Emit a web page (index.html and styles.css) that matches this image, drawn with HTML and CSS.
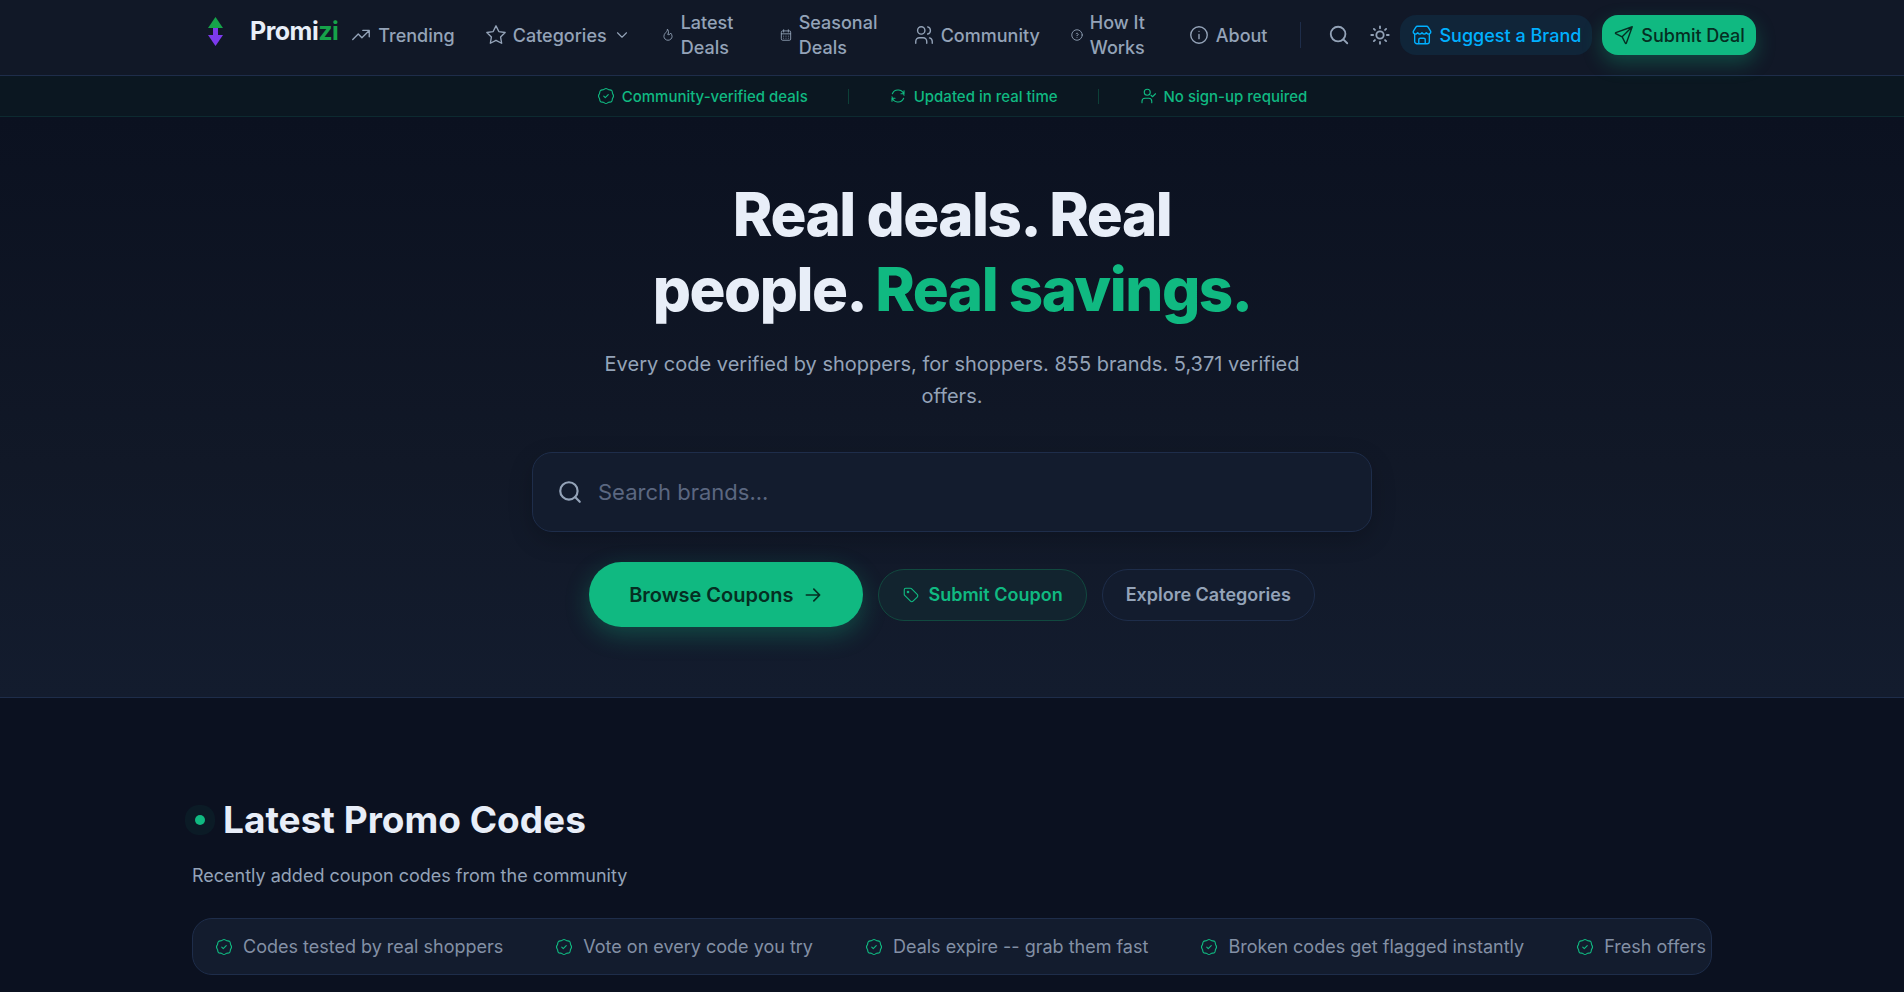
FILE: index.html
```
<!DOCTYPE html>
<html lang="en">
<head>
    <meta charset="UTF-8">
    <meta name="viewport" content="width=device-width, initial-scale=1.0">
    <title>Promizi - Community-verified promo codes</title>
    <link rel="stylesheet" href="styles.css">
</head>
<body>
    <!-- Icon set -->
    <svg class="sprite" aria-hidden="true">
        <symbol id="i-trending" viewBox="0 0 24 24"><path d="M3 17l6-6 4 4 8-8M14 7h7v7"/></symbol>
        <symbol id="i-star" viewBox="0 0 24 24"><path d="M12 17.75l-6.172 3.245 1.179-6.873-5-4.867 6.9-1 3.086-6.253 3.086 6.253 6.9 1-5 4.867 1.179 6.873z"/></symbol>
        <symbol id="i-chevron" viewBox="0 0 24 24"><path d="M6 9l6 6 6-6"/></symbol>
        <symbol id="i-flame" viewBox="0 0 24 24"><path d="M12 10.941c2.333-3.308.167-7.823-1-8.941 0 3.395-2.235 5.299-3.667 6.706C5.903 10.114 5 12.327 5 14.294 5 17.998 8.134 21 12 21s7-3.002 7-6.706c0-1.712-1.232-4.403-2.333-5.588-2.084 3.353-3.257 3.353-4.667 2.235"/></symbol>
        <symbol id="i-calendar" viewBox="0 0 24 24"><path d="M4 7a2 2 0 0 1 2-2h12a2 2 0 0 1 2 2v12a2 2 0 0 1-2 2H6a2 2 0 0 1-2-2zM16 3v4M8 3v4M4 10h16M8 14h.01M12 14h.01M16 14h.01M8 17.500h.01M12 17.500h.01M16 17.500h.01"/></symbol>
        <symbol id="i-users" viewBox="0 0 24 24"><circle cx="9" cy="7" r="4"/><path d="M3 21v-2a4 4 0 0 1 4-4h4a4 4 0 0 1 4 4v2M16 3.130a4 4 0 0 1 0 7.750M21 21v-2a4 4 0 0 0-3-3.850"/></symbol>
        <symbol id="i-help" viewBox="0 0 24 24"><circle cx="12" cy="12" r="9"/><path d="M12 16v.01M12 13a2 2 0 0 0 .914-3.782 1.980 1.980 0 0 0-2.414.483"/></symbol>
        <symbol id="i-info" viewBox="0 0 24 24"><circle cx="12" cy="12" r="9"/><path d="M12 8h.01M12 11.500v4.500"/></symbol>
        <symbol id="i-search" viewBox="0 0 24 24"><circle cx="11" cy="11" r="8"/><path d="M21 21l-4.300-4.300"/></symbol>
        <symbol id="i-sun" viewBox="0 0 24 24"><circle cx="12" cy="12" r="4"/><path d="M2.500 12h2M12 2.500v2M19.500 12h2M12 19.500v2M5.300 5.300l1.200 1.200M18.700 5.300l-1.200 1.200M17.500 17.500l1.200 1.200M6.500 17.500l-1.200 1.200"/></symbol>
        <symbol id="i-store" viewBox="0 0 24 24"><path d="M7 2.500h10a2 2 0 0 1 1.700 1L21.500 8v1a1.500 1.500 0 0 1-1.500 1.500M7 2.500a2 2 0 0 0-1.700 1L2.500 8v1A1.500 1.500 0 0 0 4 10.500M2.500 9.500q2.400 3 4.800 0 2.300 3 4.700 0 2.400 3 4.700 0 2.400 3 4.800 0M4 10.500V19a2.500 2.500 0 0 0 2.500 2.500h11A2.500 2.500 0 0 0 20 19v-8.500M8.500 21.500V17a1.500 1.500 0 0 1 1.500-1.500h4a1.500 1.500 0 0 1 1.500 1.500v4.500"/></symbol>
        <symbol id="i-send" viewBox="0 0 24 24"><path d="M10 14L21 3M21 3l-6.500 18a.55.55 0 0 1-1 0L10 14l-7-3.500a.55.55 0 0 1 0-1z"/></symbol>
        <symbol id="i-verified" viewBox="0 0 24 24"><path d="M12 2c1.600 0 2.300 1.200 3.700 1.600s2.700-.1 3.800 1 .8 2.400 1.200 3.800S22 10.500 22 12s-1 2.200-1.400 3.600-.1 2.700-1.200 3.800-2.400.6-3.800 1S13.600 22 12 22s-2.200-1.200-3.600-1.600-2.700.1-3.800-1-.8-2.500-1.200-3.800S2 13.500 2 12s1-2.200 1.400-3.600.1-2.600 1.200-3.700 2.400-.6 3.800-1S10.400 2 12 2zM9 12.200l2 2 4-4"/></symbol>
        <symbol id="i-refresh" viewBox="0 0 24 24"><path d="M20 11A8.100 8.100 0 0 0 4.500 9M4 13a8.100 8.100 0 0 0 15.500 2M20 5v4h-4M4 19v-4h4"/></symbol>
        <symbol id="i-user-check" viewBox="0 0 24 24"><circle cx="11" cy="7" r="4"/><path d="M4 21v-2a4 4 0 0 1 4-4h5a4 4 0 0 1 4 4v2M16 11l2 2 4-4"/></symbol>
        <symbol id="i-tag" viewBox="0 0 24 24"><circle cx="8" cy="8" r="1"/><path d="M3 5v6.200a2 2 0 0 0 .6 1.400l7.700 7.700a2.400 2.400 0 0 0 3.400 0l5.600-5.600a2.400 2.400 0 0 0 0-3.400l-7.700-7.700A2 2 0 0 0 11.200 3H5a2 2 0 0 0-2 2z"/></symbol>
        <symbol id="i-arrow" viewBox="0 0 24 24"><path d="M4 12h16M13 5l7 7-7 7"/></symbol>
    </svg>

    <div class="page">
        <header class="header">
            <div class="header-inner">
                <a href="#" class="logo">
                    <svg class="logo-mark" viewBox="0 1 46 42" aria-hidden="true">
                        <path d="M21 17h5v14h-5z" fill="#7c3aed"/>
                        <path d="M23.500 8L31 19H16z" fill="#16a34a"/>
                        <path d="M16 26h15l-7.500 11z" fill="#7c3aed"/>
                    </svg>
                    <span class="logo-text">Promi<span>zi</span></span>
                </a>
                <nav class="nav">
                    <a href="#"><svg class="icon"><use href="#i-trending"/></svg><span>Trending</span></a>
                    <a href="#"><svg class="icon"><use href="#i-star"/></svg><span>Categories</span><svg class="icon chevron"><use href="#i-chevron"/></svg></a>
                    <a href="#" class="two-line"><svg class="icon"><use href="#i-flame"/></svg><span>Latest<br>Deals</span></a>
                    <a href="#" class="two-line wide"><svg class="icon"><use href="#i-calendar"/></svg><span>Seasonal<br>Deals</span></a>
                    <a href="#"><svg class="icon"><use href="#i-users"/></svg><span>Community</span></a>
                    <a href="#" class="two-line"><svg class="icon"><use href="#i-help"/></svg><span>How It<br>Works</span></a>
                    <a href="#"><svg class="icon"><use href="#i-info"/></svg><span>About</span></a>
                </nav>
                <div class="actions">
                    <button type="button" class="icon-btn" aria-label="Search"><svg class="icon"><use href="#i-search"/></svg></button>
                    <button type="button" class="icon-btn" aria-label="Toggle theme"><svg class="icon"><use href="#i-sun"/></svg></button>
                    <a href="#" class="action suggest"><svg class="icon"><use href="#i-store"/></svg>Suggest a Brand</a>
                    <a href="#" class="action submit"><svg class="icon"><use href="#i-send"/></svg>Submit Deal</a>
                </div>
            </div>
        </header>

        <div class="trust-bar">
            <span class="trust-item"><svg class="icon"><use href="#i-verified"/></svg>Community-verified deals</span>
            <span class="trust-sep"></span>
            <span class="trust-item"><svg class="icon"><use href="#i-refresh"/></svg>Updated in real time</span>
            <span class="trust-sep"></span>
            <span class="trust-item"><svg class="icon"><use href="#i-user-check"/></svg>No sign-up required</span>
        </div>

        <main>
            <section class="hero">
                <h1>Real deals. Real people. <span>Real savings.</span></h1>
                <p>Every code verified by shoppers, for shoppers. 855 brands. 5,371 verified offers.</p>
                <form class="search">
                    <label for="brand-search" aria-label="Search brands"><svg class="icon"><use href="#i-search"/></svg></label>
                    <input type="search" id="brand-search" placeholder="Search brands...">
                </form>
                <div class="hero-buttons">
                    <a href="#" class="btn btn-primary">Browse Coupons<svg class="icon"><use href="#i-arrow"/></svg></a>
                    <a href="#" class="btn btn-outline"><svg class="icon"><use href="#i-tag"/></svg>Submit Coupon</a>
                    <a href="#" class="btn btn-ghost">Explore Categories</a>
                </div>
            </section>

            <section class="latest">
                <h2><span class="live-dot"></span>Latest Promo Codes</h2>
                <p>Recently added coupon codes from the community</p>
                <div class="ticker">
                    <span><svg class="icon"><use href="#i-verified"/></svg>Codes tested by real shoppers</span>
                    <span><svg class="icon"><use href="#i-verified"/></svg>Vote on every code you try</span>
                    <span><svg class="icon"><use href="#i-verified"/></svg>Deals expire -- grab them fast</span>
                    <span><svg class="icon"><use href="#i-verified"/></svg>Broken codes get flagged instantly</span>
                    <span><svg class="icon"><use href="#i-verified"/></svg>Fresh offers added daily</span>
                </div>
            </section>
        </main>
    </div>
</body>
</html>
```
FILE: styles.css
```
* {
    box-sizing: border-box;
}
html {
    background-color: #fff;
}
body {
    margin: 0;
    font-family: Inter, "Liberation Sans", sans-serif;
    font-size: 18px;
    color: #e8eef8;
}
a {
    color: inherit;
    text-decoration: none;
}
.sprite {
    display: none;
}
.icon {
    width: 22px;
    height: 22px;
    flex-shrink: 0;
    fill: none;
    stroke: currentColor;
    stroke-width: 1.5;
    stroke-linecap: round;
    stroke-linejoin: round;
}
.page {
    background-color: #0b1120;
    overflow: hidden;
}

/* Header */
.header {
    background-color: #111827;
    border-bottom: 1px solid #1e2d4a;
}
.header-inner {
    max-width: 1520px;
    margin: 0 auto;
    padding: 10px 0 15px;
    display: flex;
    align-items: center;
    white-space: nowrap;
}
.logo {
    display: flex;
    align-items: center;
    align-self: flex-start;
    gap: 12px;
    flex-shrink: 0;
}
.logo-mark {
    width: 46px;
    height: 42px;
}
.logo-text {
    font-size: 25px;
    font-weight: 700;
    letter-spacing: -0.02em;
}
.logo-text span {
    color: #16a34a;
}
.nav {
    display: flex;
    align-items: center;
    gap: 30px;
    flex-shrink: 0;
    margin-left: 12px;
    padding-right: 33px;
    color: #94a3b8;
    font-weight: 500;
    line-height: 25px;
}
.nav a {
    display: flex;
    align-items: center;
    gap: 6px;
}
.nav .chevron {
    width: 18px;
    height: 18px;
}
.nav .two-line .icon {
    width: 14px;
    height: 14px;
}
.nav .two-line span {
    width: 68px;
}
.nav .wide span {
    width: 84px;
}
.actions {
    display: flex;
    align-items: center;
    flex-shrink: 0;
    position: relative;
    padding-left: 18px;
    font-weight: 500;
}
.actions::before {
    content: "";
    position: absolute;
    left: 0;
    width: 1px;
    height: 26px;
    background-color: #1e2d4a;
}
.icon-btn {
    width: 41px;
    height: 40px;
    padding: 0;
    border: none;
    background: none;
    color: #94a3b8;
    display: flex;
    align-items: center;
    justify-content: center;
    cursor: pointer;
}
.icon-btn .icon {
    stroke-width: 2;
}
.action {
    display: flex;
    align-items: center;
    gap: 6px;
    height: 40px;
    padding: 0 11px;
    border-radius: 16px;
}
.suggest {
    background-color: #102539;
    color: #00b0ff;
    margin-right: 10px;
}
.submit {
    background-color: #10b981;
    color: #052e22;
    box-shadow: 0 8px 20px rgba(16, 185, 129, 0.3);
}

/* Trust bar */
.trust-bar {
    display: flex;
    align-items: center;
    justify-content: center;
    gap: 40px;
    height: 41px;
    background-color: #0b1721;
    border-bottom: 1px solid #0d2a30;
    color: #10b981;
    font-size: 15px;
    font-weight: 500;
}
.trust-item {
    display: flex;
    align-items: center;
    gap: 7px;
}
.trust-item .icon {
    width: 18px;
    height: 18px;
}
.trust-sep {
    width: 1px;
    height: 15px;
    background-color: #0d4038;
}

/* Hero */
.hero {
    display: flex;
    flex-direction: column;
    align-items: center;
    padding: 60px 24px 70px;
    background: linear-gradient(#0b1120, #111827 60%, #131c2e);
    border-bottom: 1px solid #1e2d4a;
    text-align: center;
}
.hero h1 {
    max-width: 640px;
    margin: 0;
    font-size: 60px;
    font-weight: 800;
    line-height: 75px;
    letter-spacing: -0.025em;
}
.hero h1 span {
    color: #10b981;
}
.hero p {
    max-width: 704px;
    margin: 21px 0 40px;
    font-size: 20px;
    line-height: 32px;
    color: #94a3b8;
}
.search {
    display: flex;
    align-items: center;
    gap: 15px;
    width: 100%;
    max-width: 840px;
    height: 80px;
    padding: 0 24px;
    background-color: #131c2e;
    border: 1px solid #1e2d4a;
    border-radius: 20px;
    box-shadow: 0 8px 24px rgba(0, 0, 0, 0.2);
}
.search label {
    display: flex;
    color: #94a3b8;
}
.search .icon {
    width: 26px;
    height: 26px;
    stroke-width: 2;
}
.search input {
    flex: 1;
    padding: 0;
    border: none;
    outline: none;
    background: none;
    color: #e8eef8;
    font: inherit;
    font-size: 22px;
}
.search input::placeholder {
    color: #5b6780;
}
.hero-buttons {
    display: flex;
    align-items: center;
    gap: 15px;
    margin-top: 30px;
}
.btn {
    display: flex;
    align-items: center;
    gap: 8px;
    height: 52px;
    padding: 0 23px;
    border: 1px solid transparent;
    border-radius: 33px;
    font-weight: 600;
    white-space: nowrap;
}
.btn .icon {
    width: 18px;
    height: 18px;
}
.btn-primary {
    height: 65px;
    padding: 0 39px;
    gap: 10px;
    background-color: #10b981;
    color: #052e22;
    font-size: 20px;
    box-shadow: 0 8px 24px rgba(16, 185, 129, 0.3);
}
.btn-primary .icon {
    width: 20px;
    height: 20px;
    stroke-width: 2;
}
.btn-outline {
    background-color: #12242f;
    border-color: #11493f;
    color: #10b981;
}
.btn-ghost {
    background-color: #131c2e;
    border-color: #1e2d4a;
    color: #94a3b8;
}

/* Latest codes */
.latest {
    max-width: 1520px;
    margin: 0 auto;
    padding: 98px 0 17px;
}
.latest h2 {
    display: flex;
    align-items: center;
    gap: 18px;
    margin: 0;
    font-size: 37px;
    font-weight: 700;
    line-height: 48px;
}
.live-dot {
    width: 10px;
    height: 10px;
    margin-left: 3px;
    border-radius: 50%;
    background-color: #10b981;
    box-shadow: 0 0 0 10px rgba(16, 185, 129, 0.06);
}
.latest p {
    margin: 18px 0 28px;
    line-height: 28px;
    color: #94a3b8;
}
.ticker {
    display: flex;
    align-items: center;
    gap: 52px;
    height: 57px;
    padding: 0 22px;
    overflow: hidden;
    white-space: nowrap;
    background-color: #131c2e;
    border: 1px solid #1e2d4a;
    border-radius: 20px;
    color: #8390a5;
}
.ticker span {
    display: flex;
    align-items: center;
    gap: 10px;
}
.ticker .icon {
    width: 18px;
    height: 18px;
    color: #10b981;
}
```
